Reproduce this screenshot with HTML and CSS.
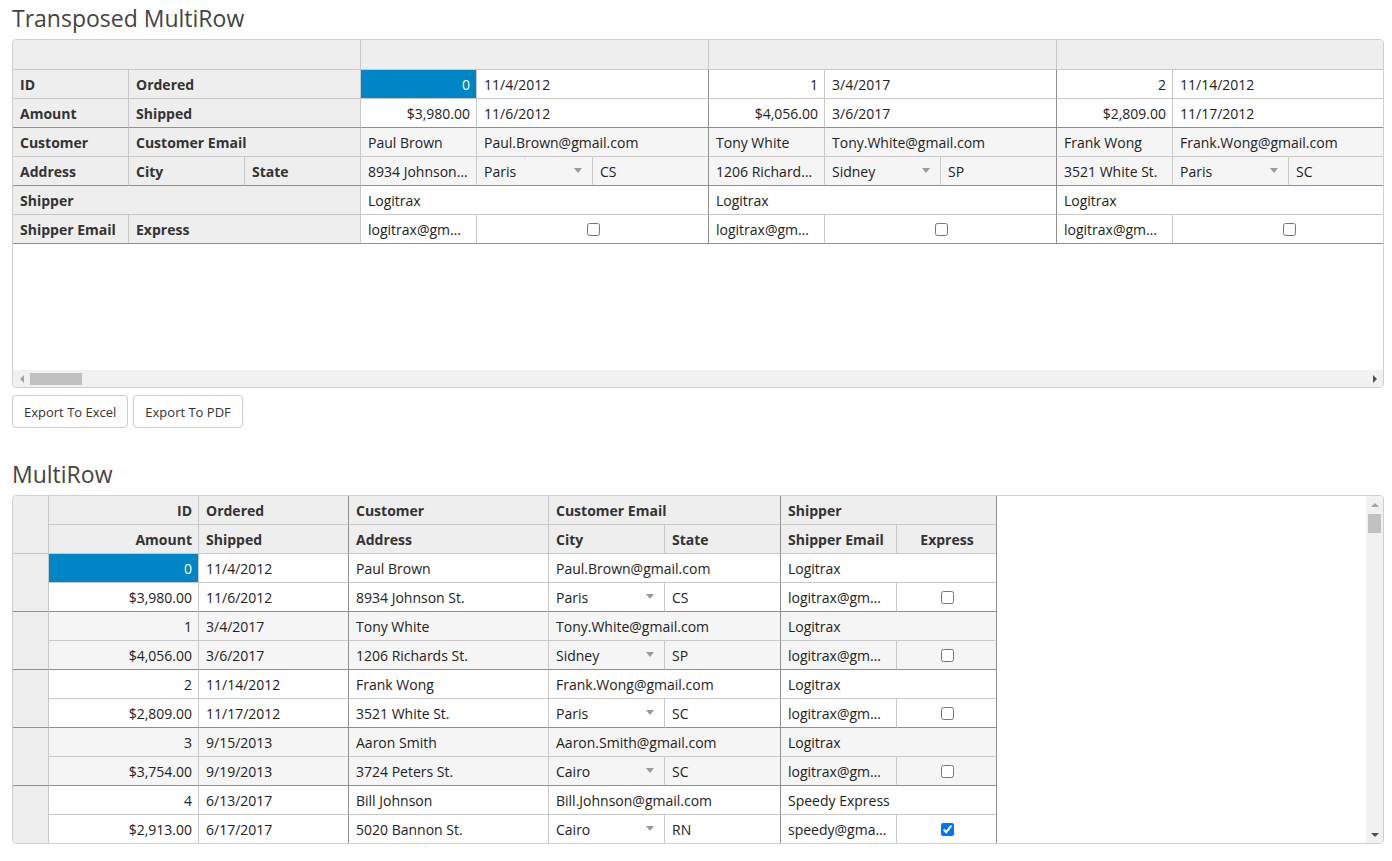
FILE: index.html
```html
<!DOCTYPE html>
<html lang="en">
<head>
<meta charset="utf-8">
<title>MultiRow</title>
<link rel="stylesheet" href="styles.css">
</head>
<body>
<h2 class="title first">Transposed MultiRow</h2>
<div class="grid tgrid">
  <div class="tview">
    <div class="row thead">
      <div class="c hd w348"></div>
      <div class="c hd w348"></div>
      <div class="c hd w348"></div>
      <div class="c hd w348"></div>
    </div>
    <div class="row">
      <div class="c hd w116">ID</div><div class="c hd w232">Ordered</div>
      <div class="c w116 r sel">0</div><div class="c w232 ge">11/4/2012</div>
      <div class="c w116 r">1</div><div class="c w232 ge">3/4/2017</div>
      <div class="c w116 r">2</div><div class="c w232 ge">11/14/2012</div>
    </div>
    <div class="row dk">
      <div class="c hd w116">Amount</div><div class="c hd w232">Shipped</div>
      <div class="c w116 r">$3,980.00</div><div class="c w232 ge">11/6/2012</div>
      <div class="c w116 r">$4,056.00</div><div class="c w232 ge">3/6/2017</div>
      <div class="c w116 r">$2,809.00</div><div class="c w232 ge">11/17/2012</div>
    </div>
    <div class="row alt">
      <div class="c hd w116">Customer</div><div class="c hd w232">Customer Email</div>
      <div class="c w116">Paul Brown</div><div class="c w232 ge">Paul.Brown@gmail.com</div>
      <div class="c w116">Tony White</div><div class="c w232 ge">Tony.White@gmail.com</div>
      <div class="c w116">Frank Wong</div><div class="c w232 ge">Frank.Wong@gmail.com</div>
    </div>
    <div class="row alt dk">
      <div class="c hd w116">Address</div><div class="c hd w116">City</div><div class="c hd w116">State</div>
      <div class="c w116">8934 Johnson…</div><div class="c w116 dd">Paris<span class="arr"></span></div><div class="c w116 ge">CS</div>
      <div class="c w116">1206 Richard…</div><div class="c w116 dd">Sidney<span class="arr"></span></div><div class="c w116 ge">SP</div>
      <div class="c w116">3521 White St.</div><div class="c w116 dd">Paris<span class="arr"></span></div><div class="c w116 ge">SC</div>
    </div>
    <div class="row">
      <div class="c hd w348">Shipper</div>
      <div class="c w348 ge">Logitrax</div>
      <div class="c w348 ge">Logitrax</div>
      <div class="c w348 ge">Logitrax</div>
    </div>
    <div class="row dk">
      <div class="c hd w116">Shipper Email</div><div class="c hd w232">Express</div>
      <div class="c w116">logitrax@gm…</div><div class="c w232 ctr ge"><input type="checkbox"></div>
      <div class="c w116">logitrax@gm…</div><div class="c w232 ctr ge"><input type="checkbox"></div>
      <div class="c w116">logitrax@gm…</div><div class="c w232 ctr ge"><input type="checkbox"></div>
    </div>
  </div>
  <div class="hscroll">
    <div class="sbtn"><span class="tri-l"></span></div>
    <div class="hthumb"></div>
    <div class="sfill"></div>
    <div class="sbtn"><span class="tri-r"></span></div>
  </div>
</div>
<div class="buttons">
  <button class="btn">Export To Excel</button>
  <button class="btn">Export To PDF</button>
</div>

<h2 class="title second">MultiRow</h2>
<div class="grid mgrid">
  <div class="mview">
    <div class="rec">
      <div class="c hd rh"></div>
      <div class="rows">
        <div class="row">
          <div class="c hd w150 r">ID</div><div class="c hd w150 ge">Ordered</div>
          <div class="c hd w200">Customer</div><div class="c hd w232 ge">Customer Email</div>
          <div class="c hd w216 ge">Shipper</div>
        </div>
        <div class="row">
          <div class="c hd w150 r">Amount</div><div class="c hd w150 ge">Shipped</div>
          <div class="c hd w200">Address</div><div class="c hd w116">City</div><div class="c hd w116 ge">State</div>
          <div class="c hd w116">Shipper Email</div><div class="c hd w100 ctr ge">Express</div>
        </div>
      </div>
    </div>

    <div class="rec data">
      <div class="c hd rh"></div>
      <div class="rows">
        <div class="row">
          <div class="c w150 r sel">0</div><div class="c w150 ge">11/4/2012</div>
          <div class="c w200">Paul Brown</div><div class="c w232 ge">Paul.Brown@gmail.com</div>
          <div class="c w216 ge">Logitrax</div>
        </div>
        <div class="row dk">
          <div class="c w150 r">$3,980.00</div><div class="c w150 ge">11/6/2012</div>
          <div class="c w200">8934 Johnson St.</div><div class="c w116 dd">Paris<span class="arr"></span></div><div class="c w116 ge">CS</div>
          <div class="c w116">logitrax@gm…</div><div class="c w100 ctr ge"><input type="checkbox"></div>
        </div>
      </div>
    </div>

    <div class="rec data alt">
      <div class="c hd rh"></div>
      <div class="rows">
        <div class="row">
          <div class="c w150 r">1</div><div class="c w150 ge">3/4/2017</div>
          <div class="c w200">Tony White</div><div class="c w232 ge">Tony.White@gmail.com</div>
          <div class="c w216 ge">Logitrax</div>
        </div>
        <div class="row dk">
          <div class="c w150 r">$4,056.00</div><div class="c w150 ge">3/6/2017</div>
          <div class="c w200">1206 Richards St.</div><div class="c w116 dd">Sidney<span class="arr"></span></div><div class="c w116 ge">SP</div>
          <div class="c w116">logitrax@gm…</div><div class="c w100 ctr ge"><input type="checkbox"></div>
        </div>
      </div>
    </div>

    <div class="rec data">
      <div class="c hd rh"></div>
      <div class="rows">
        <div class="row">
          <div class="c w150 r">2</div><div class="c w150 ge">11/14/2012</div>
          <div class="c w200">Frank Wong</div><div class="c w232 ge">Frank.Wong@gmail.com</div>
          <div class="c w216 ge">Logitrax</div>
        </div>
        <div class="row dk">
          <div class="c w150 r">$2,809.00</div><div class="c w150 ge">11/17/2012</div>
          <div class="c w200">3521 White St.</div><div class="c w116 dd">Paris<span class="arr"></span></div><div class="c w116 ge">SC</div>
          <div class="c w116">logitrax@gm…</div><div class="c w100 ctr ge"><input type="checkbox"></div>
        </div>
      </div>
    </div>

    <div class="rec data alt">
      <div class="c hd rh"></div>
      <div class="rows">
        <div class="row">
          <div class="c w150 r">3</div><div class="c w150 ge">9/15/2013</div>
          <div class="c w200">Aaron Smith</div><div class="c w232 ge">Aaron.Smith@gmail.com</div>
          <div class="c w216 ge">Logitrax</div>
        </div>
        <div class="row dk">
          <div class="c w150 r">$3,754.00</div><div class="c w150 ge">9/19/2013</div>
          <div class="c w200">3724 Peters St.</div><div class="c w116 dd">Cairo<span class="arr"></span></div><div class="c w116 ge">SC</div>
          <div class="c w116">logitrax@gm…</div><div class="c w100 ctr ge"><input type="checkbox"></div>
        </div>
      </div>
    </div>

    <div class="rec data">
      <div class="c hd rh"></div>
      <div class="rows">
        <div class="row">
          <div class="c w150 r">4</div><div class="c w150 ge">6/13/2017</div>
          <div class="c w200">Bill Johnson</div><div class="c w232 ge">Bill.Johnson@gmail.com</div>
          <div class="c w216 ge">Speedy Express</div>
        </div>
        <div class="row dk">
          <div class="c w150 r">$2,913.00</div><div class="c w150 ge">6/17/2017</div>
          <div class="c w200">5020 Bannon St.</div><div class="c w116 dd">Cairo<span class="arr"></span></div><div class="c w116 ge">RN</div>
          <div class="c w116">speedy@gma…</div><div class="c w100 ctr ge"><input type="checkbox" checked></div>
        </div>
      </div>
    </div>
  </div>
  <div class="vscroll">
    <div class="vbtn"><span class="tri-u"></span></div>
    <div class="vthumb"></div>
    <div class="sfill"></div>
    <div class="vbtn"><span class="tri-d"></span></div>
  </div>
</div>
</body>
</html>
```

FILE: styles.css
```css
html, body {
  margin: 0;
  padding: 0;
  background: #fff;
}

body {
  padding-left: 12px;
  font-family: "Open Sans", "Noto Sans", "Liberation Sans", sans-serif;
  font-size: 14px;
  color: #222;
}

.title {
  margin: 0;
  font-size: 23px;
  font-weight: 400;
  line-height: 36px;
  height: 36px;
  color: #444;
}

.title.first {
  margin-bottom: 3px;
}

.title.second {
  margin-top: 28px;
  margin-bottom: 3px;
}

.grid {
  box-sizing: border-box;
  width: 1372px;
  height: 349px;
  border: 1px solid #cfcfcf;
  border-radius: 4px;
  overflow: hidden;
  background: #fff;
}

/* ---------- generic cells ---------- */
.row {
  display: flex;
  flex-wrap: nowrap;
}

.c {
  flex: none;
  box-sizing: border-box;
  height: 29px;
  padding: 0 6px 0 7px;
  border-right: 1px solid #c8c8c8;
  border-bottom: 1px solid #c8c8c8;
  display: flex;
  align-items: center;
  white-space: nowrap;
  overflow: hidden;
  background: #fff;
}

.thead > .c { height: 30px; }

.hd {
  background: #eeeeee;
  font-weight: 700;
  color: #333;
}

.r { justify-content: flex-end; }
.ctr { justify-content: center; }

.ge { border-right-color: #8f8f8f; }
.dk > .c { border-bottom-color: #8f8f8f; }

.alt > .c:not(.hd) { background: #f5f5f5; }

.sel {
  background: #0085c7 !important;
  color: #fff;
}

.w100 { width: 100px; }
.w116 { width: 116px; }
.w150 { width: 150px; }
.w200 { width: 200px; }
.w216 { width: 216px; }
.w232 { width: 232px; }
.w348 { width: 348px; }

.dd { justify-content: space-between; padding-right: 10px; }

.arr {
  width: 0;
  height: 0;
  border-left: 4px solid transparent;
  border-right: 4px solid transparent;
  border-top: 5px solid #999;
  margin-top: -2px;
}

.c input[type="checkbox"] {
  margin: 0;
  width: 13px;
  height: 13px;
}

/* ---------- transposed grid ---------- */
.tview {
  height: 330px;
  overflow: hidden;
}

.hscroll {
  height: 17px;
  display: flex;
  align-items: center;
  background: #f1f1f1;
}

.sbtn {
  flex: none;
  width: 17px;
  height: 17px;
  display: flex;
  align-items: center;
  justify-content: center;
}

.tri-l {
  width: 0;
  height: 0;
  border-top: 4px solid transparent;
  border-bottom: 4px solid transparent;
  border-right: 4px solid #a3a3a3;
}

.tri-r {
  width: 0;
  height: 0;
  border-top: 4px solid transparent;
  border-bottom: 4px solid transparent;
  border-left: 4px solid #505050;
}

.hthumb {
  flex: none;
  width: 52px;
  height: 12px;
  background: #c1c1c1;
}

.sfill { flex: 1; }

.buttons {
  display: flex;
  gap: 5px;
  margin-top: 7px;
}

.btn {
  box-sizing: border-box;
  height: 33px;
  padding: 0 11px;
  border: 1px solid #cccccc;
  border-radius: 4px;
  background: #fff;
  font-family: "Open Sans", "Noto Sans", "Liberation Sans", sans-serif;
  font-size: 13px;
  color: #333;
}

/* ---------- multirow grid ---------- */
.mgrid {
  display: flex;
}

.mview {
  flex: 1;
  overflow: hidden;
}

.rec {
  display: flex;
}

.rh {
  width: 36px;
  height: 58px;
  padding: 0;
}

.rec.data .rh { border-bottom-color: #8f8f8f; }

.rec.alt .rows .c { background: #f5f5f5; }

.vscroll {
  flex: none;
  width: 17px;
  display: flex;
  flex-direction: column;
  background: #f1f1f1;
}

.vbtn {
  flex: none;
  width: 17px;
  height: 17px;
  display: flex;
  align-items: center;
  justify-content: center;
}

.tri-u {
  width: 0;
  height: 0;
  border-left: 4px solid transparent;
  border-right: 4px solid transparent;
  border-bottom: 4px solid #a3a3a3;
}

.tri-d {
  width: 0;
  height: 0;
  border-left: 4px solid transparent;
  border-right: 4px solid transparent;
  border-top: 4px solid #505050;
}

.vthumb {
  flex: none;
  margin: 1px auto 0;
  width: 13px;
  height: 19px;
  background: #c1c1c1;
}
```
